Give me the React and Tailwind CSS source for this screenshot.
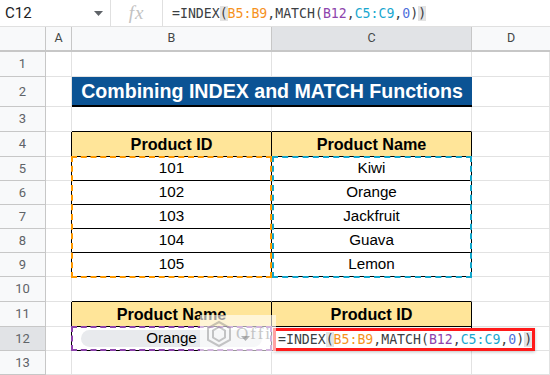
import React from 'react'

const sans = { fontFamily: '"Liberation Sans", Arial, sans-serif' }

// one cell of the sheet; r / b turn the right / bottom edge black
function Cell({ w, r, b, className = '', children }) {
  return (
    <div
      className={`${w} shrink-0 h-full flex items-center justify-center border-r border-b ${
        r ? 'border-r-black' : 'border-r-[#e2e2e2]'
      } ${b ? 'border-b-black' : 'border-b-[#e2e2e2]'} ${className}`}
    >
      {children}
    </div>
  )
}

function Row({ n, h, active, children }) {
  return (
    <div className={`flex ${h}`}>
      <div
        className={`w-[46px] shrink-0 flex items-center justify-center border-r border-b border-[#c7c7c7] text-[13px] text-[#5f6368] font-['Roboto',sans-serif] ${
          active ? 'bg-[#e1e3e6]' : 'bg-[#f8f9fa]'
        }`}
      >
        {n}
      </div>
      {children}
    </div>
  )
}

function Formula() {
  return (
    <span className="font-['DejaVu_Sans_Mono',monospace] text-[13.2px] text-[#3c4043] whitespace-pre">
      =INDEX<span className="bg-[#e3e3e3]">(</span>
      <span className="text-[#f6921e]">B5:B9</span>,MATCH(
      <span className="text-[#8e44ad]">B12</span>,
      <span className="text-[#1aa7cf]">C5:C9</span>,
      <span className="text-[#4f6edb]">0</span>)<span className="bg-[#e3e3e3]">)</span>
    </span>
  )
}

const products = [
  ['101', 'Kiwi'],
  ['102', 'Orange'],
  ['103', 'Jackfruit'],
  ['104', 'Guava'],
  ['105', 'Lemon'],
]

export default function App() {
  return (
    <div className="w-[550px] h-[375px] overflow-hidden bg-white" style={sans}>
      {/* formula bar */}
      <div className="flex items-center h-[27px] border-b border-[#e0e0e0] font-['Roboto',sans-serif]">
        <div className="w-[111px] h-full flex items-center justify-between pl-[5px] pr-[7px] border-r border-[#e0e0e0]">
          <span className="text-[15px] text-[#202124]">C12</span>
          <svg width="9" height="5" viewBox="0 0 9 5">
            <path d="M0 0h9L4.5 5z" fill="#5f6368" />
          </svg>
        </div>
        <div className="w-[52px] h-full flex items-center justify-center border-r border-[#e0e0e0]">
          <span className="font-['Liberation_Serif',serif] italic text-[19px] text-[#c2c2c2] tracking-[1px]">fx</span>
        </div>
        <div className="pl-[9px]">
          <Formula />
        </div>
      </div>

      {/* column headers */}
      <div className="flex h-[25px] border-b-2 border-[#c7c7c7] text-[12.5px] text-[#444746] font-['Roboto',sans-serif]">
        <div className="w-[46px] shrink-0 bg-[#f8f9fa] border-r border-[#c7c7c7]" />
        <div className="w-[26px] shrink-0 bg-[#f8f9fa] border-r border-[#c7c7c7] flex items-center justify-center">A</div>
        <div className="w-[200px] shrink-0 bg-[#f8f9fa] border-r border-[#c7c7c7] flex items-center justify-center">B</div>
        <div className="w-[200px] shrink-0 bg-[#e1e3e6] border-r border-[#c7c7c7] flex items-center justify-center">C</div>
        <div className="flex-1 bg-[#f8f9fa] flex items-center justify-center">D</div>
      </div>

      <Row n="1" h="h-[25px]">
        <Cell w="w-[26px]" />
        <Cell w="w-[200px]" />
        <Cell w="w-[200px]" />
        <Cell w="flex-1" />
      </Row>

      <Row n="2" h="h-[30px]">
        <Cell w="w-[26px]" />
        <div className="w-[400px] shrink-0 h-full flex items-center justify-center bg-[#0b5394] border-b-2 border-black">
          <span className="text-white font-bold text-[19.6px] pt-[1px]">Combining INDEX and MATCH Functions</span>
        </div>
        <Cell w="flex-1" />
      </Row>

      <Row n="3" h="h-[25px]">
        <Cell w="w-[26px]" />
        <Cell w="w-[200px]" b />
        <Cell w="w-[200px]" b />
        <Cell w="flex-1" />
      </Row>

      <Row n="4" h="h-[25px]">
        <Cell w="w-[26px]" r />
        <Cell w="w-[200px]" r b className="bg-[#ffe599] font-bold text-[16.2px] text-black">Product ID</Cell>
        <Cell w="w-[200px]" r b className="bg-[#ffe599] font-bold text-[16.2px] text-black">Product Name</Cell>
        <Cell w="flex-1" />
      </Row>

      {products.map(([id, name], i) => (
        <Row key={id} n={String(i + 5)} h="h-[24px]">
          <Cell w="w-[26px]" r />
          <Cell w="w-[200px]" r b className="relative text-[15.2px] text-black">
            {id}
            {i === 0 && (
              <div className="absolute left-[-1px] top-[-1px] w-[201px] h-[122px] border-2 border-dashed border-[#ff9900] z-10 pointer-events-none" />
            )}
          </Cell>
          <Cell w="w-[200px]" r b className="relative text-[15.2px] text-black">
            {name}
            {i === 0 && (
              <div className="absolute left-0 top-[-1px] w-[200px] h-[122px] border-2 border-dashed border-[#12a6cc] z-10 pointer-events-none" />
            )}
          </Cell>
          <Cell w="flex-1" />
        </Row>
      ))}

      <Row n="10" h="h-[25px]">
        <Cell w="w-[26px]" />
        <Cell w="w-[200px]" b />
        <Cell w="w-[200px]" b />
        <Cell w="flex-1" />
      </Row>

      <Row n="11" h="h-[25px]">
        <Cell w="w-[26px]" r />
        <Cell w="w-[200px]" r b className="bg-[#ffe599] font-bold text-[16.2px] text-black">Product Name</Cell>
        <Cell w="w-[200px]" r b className="bg-[#ffe599] font-bold text-[16.2px] text-black">Product ID</Cell>
        <Cell w="flex-1" />
      </Row>

      <Row n="12" h="h-[24px]" active>
        <Cell w="w-[26px]" r />
        <Cell w="w-[200px]" r b className="relative px-[9px]">
          <div className="w-full h-[17px] rounded-full bg-[#e8eaed] flex items-center justify-center relative text-[15.2px] text-black">
            Orange
            <svg className="absolute right-[12px] top-[6px]" width="9" height="5" viewBox="0 0 9 5">
              <path d="M0 0h9L4.5 5z" fill="#3c4043" />
            </svg>
          </div>
          <div className="absolute left-[-1px] top-[-1px] w-[201px] h-[25px] border-2 border-dashed border-[#8e44ad] z-10 pointer-events-none" />
        </Cell>
        <Cell w="w-[200px]" r b className="relative">
          <div className="absolute left-[1px] top-[1px] w-[262px] h-[23px] bg-white border-[3px] border-[#ff1a1a] flex items-center pl-[2px] z-20 shadow-[0_1px_3px_rgba(0,0,0,0.25)]">
            <Formula />
          </div>
          {/* watermark */}
          <div className="absolute left-[-72px] top-[-12px] w-[76px] h-[37px] bg-white/60 z-30 flex items-center gap-[4px] pl-[6px] pointer-events-none">
            <svg width="26" height="28" viewBox="0 0 26 28" className="opacity-40">
              <path d="M13 2 L24 8 V20 L13 26 L2 20 V8 Z" fill="none" stroke="#777" strokeWidth="2" />
              <path d="M13 7 L19 10.5 V17.5 L13 21 L7 17.5 V10.5 Z" fill="none" stroke="#777" strokeWidth="2" />
            </svg>
            <span className="font-['Liberation_Serif',serif] text-[17px] text-[#777] opacity-40 tracking-[2px]">Offi</span>
          </div>
        </Cell>
        <Cell w="flex-1" />
      </Row>

      <Row n="13" h="h-[24px]">
        <Cell w="w-[26px]" />
        <Cell w="w-[200px]" />
        <Cell w="w-[200px]" />
        <Cell w="flex-1" />
      </Row>
    </div>
  )
}
